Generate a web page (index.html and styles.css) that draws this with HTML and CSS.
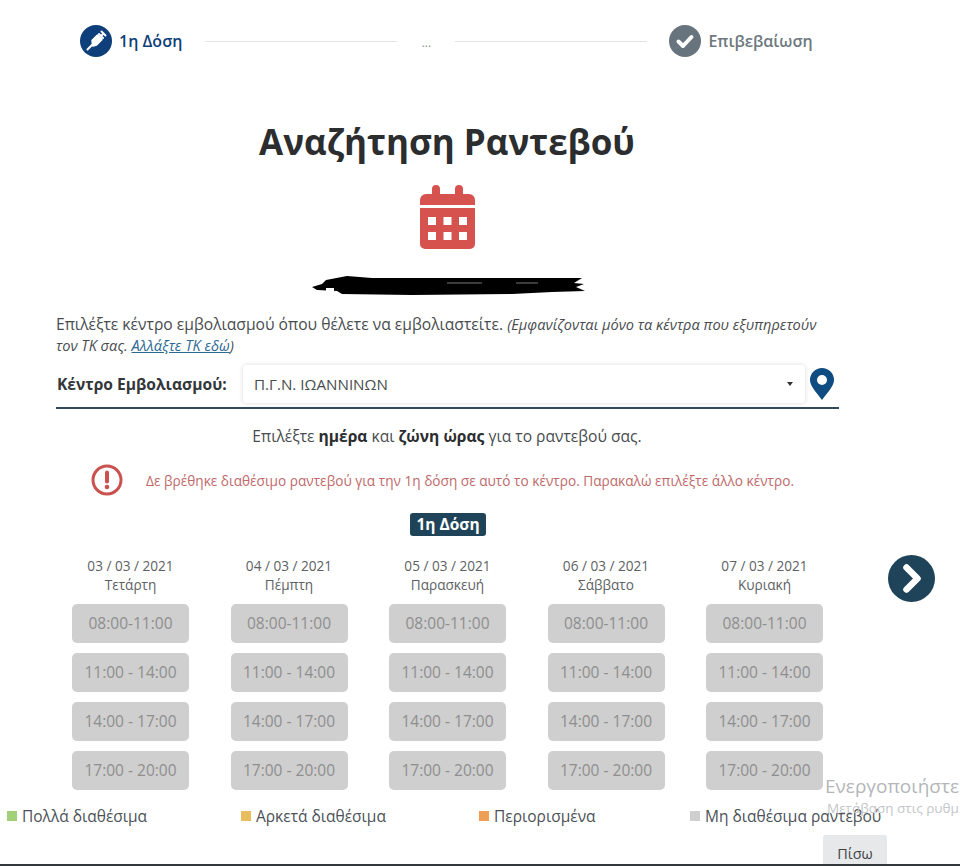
FILE: index.html
```html
<!DOCTYPE html>
<html lang="el">
<head>
  <meta charset="UTF-8">
  <meta name="viewport" content="width=device-width, initial-scale=1.0">
  <title>Αναζήτηση Ραντεβού</title>
  <link rel="stylesheet" href="styles.css">
</head>
<body>
  <div class="page">
    <header class="stepper">
      <div class="step step-active">
        <span class="step-icon">
          <svg viewBox="0 0 32 32" width="32" height="32">
            <path d="M12.500 15.500l5-5 4 4-5 5-3.500 1z" fill="#fff" stroke="#fff" stroke-width="2.400" stroke-linejoin="round"/>
            <path d="M7.500 24.500l5-5M19 9l4 4M21 11l2.500-2.500M21.500 6.500l4 4" fill="none" stroke="#fff" stroke-width="2" stroke-linecap="round"/>
          </svg>
        </span>
        <span class="step-label">1η Δόση</span>
      </div>
      <span class="step-line"></span>
      <span class="step-dots">...</span>
      <span class="step-line"></span>
      <div class="step step-next">
        <span class="step-icon">
          <svg viewBox="0 0 32 32" width="32" height="32">
            <path d="M9.500 16.500l4.500 4.500 8.500-9" fill="none" stroke="#fff" stroke-width="4" stroke-linecap="round" stroke-linejoin="round"/>
          </svg>
        </span>
        <span class="step-label">Επιβεβαίωση</span>
      </div>
    </header>

    <h1 class="title">Αναζήτηση Ραντεβού</h1>

    <svg class="calendar" viewBox="0 0 55 64" width="55" height="64">
      <path d="M12 4a4 4 0 0 1 8 0v5h15V4a4 4 0 0 1 8 0v5h6a6 6 0 0 1 6 6v5H0v-5a6 6 0 0 1 6-6h6z" fill="#d6524f"/>
      <path fill-rule="evenodd" d="M0 23h55v36a5 5 0 0 1-5 5H5a5 5 0 0 1-5-5zM8 32v8h8v-8zM23.500 32v8h8v-8zM39 32v8h8v-8zM8 47v8h8v-8zM23.500 47v8h8v-8zM39 47v8h8v-8z" fill="#d6524f"/>
    </svg>

    <svg class="redaction" viewBox="0 0 273 20" width="273" height="20">
      <path d="M0 12L10 9 14 5 35 1 60 3 150 3 270 3 262 8 272 9 264 12 273 16 240 17 200 19 100 20 30 19 25 16 5 15z" fill="#000"/>
      <path d="M14 13h8v3h-8z" fill="#fff"/>
      <path d="M135 8h35M204 8h22" stroke="#777" stroke-width="1"/>
    </svg>

    <main class="content">
      <p class="intro">Επιλέξτε κέντρο εμβολιασμού όπου θέλετε να εμβολιαστείτε. <em>(Εμφανίζονται μόνο τα κέντρα που εξυπηρετούν τον ΤΚ σας. <a href="#">Αλλάξτε ΤΚ εδώ</a>)</em></p>

      <div class="center-row">
        <label class="center-label">Κέντρο Εμβολιασμού:</label>
        <div class="select">
          <span>Π.Γ.Ν. ΙΩΑΝΝΙΝΩΝ</span>
          <span class="select-caret"></span>
        </div>
        <svg class="pin" viewBox="0 0 24 32" width="24" height="32">
          <path fill-rule="evenodd" d="M12 0a12 12 0 0 1 12 12c0 6-6 12-12 20C6 24 0 18 0 12A12 12 0 0 1 12 0zm0 7a5 5 0 1 0 0 10 5 5 0 0 0 0-10z" fill="#0f4c81"/>
        </svg>
      </div>
    </main>

    <p class="hint">Επιλέξτε <b>ημέρα</b> και <b>ζώνη ώρας</b> για το ραντεβού σας.</p>

    <div class="alert">
      <svg viewBox="0 0 32 32" width="32" height="32">
        <circle cx="16" cy="16" r="14" fill="none" stroke="#c9524e" stroke-width="3"/>
        <path d="M16 8.500v9" stroke="#c9524e" stroke-width="4" stroke-linecap="round"/>
        <circle cx="16" cy="23" r="2.300" fill="#c9524e"/>
      </svg>
      <span>Δε βρέθηκε διαθέσιμο ραντεβού για την 1η δόση σε αυτό το κέντρο. Παρακαλώ επιλέξτε άλλο κέντρο.</span>
    </div>

    <div class="badge-row"><span class="badge">1η Δόση</span></div>

    <section class="schedule">
      <div class="days">
        <div class="day">
          <div class="day-date">03 / 03 / 2021</div>
          <div class="day-name">Τετάρτη</div>
          <div class="slot">08:00-11:00</div>
          <div class="slot">11:00 - 14:00</div>
          <div class="slot">14:00 - 17:00</div>
          <div class="slot">17:00 - 20:00</div>
        </div>
        <div class="day">
          <div class="day-date">04 / 03 / 2021</div>
          <div class="day-name">Πέμπτη</div>
          <div class="slot">08:00-11:00</div>
          <div class="slot">11:00 - 14:00</div>
          <div class="slot">14:00 - 17:00</div>
          <div class="slot">17:00 - 20:00</div>
        </div>
        <div class="day">
          <div class="day-date">05 / 03 / 2021</div>
          <div class="day-name">Παρασκευή</div>
          <div class="slot">08:00-11:00</div>
          <div class="slot">11:00 - 14:00</div>
          <div class="slot">14:00 - 17:00</div>
          <div class="slot">17:00 - 20:00</div>
        </div>
        <div class="day">
          <div class="day-date">06 / 03 / 2021</div>
          <div class="day-name">Σάββατο</div>
          <div class="slot">08:00-11:00</div>
          <div class="slot">11:00 - 14:00</div>
          <div class="slot">14:00 - 17:00</div>
          <div class="slot">17:00 - 20:00</div>
        </div>
        <div class="day">
          <div class="day-date">07 / 03 / 2021</div>
          <div class="day-name">Κυριακή</div>
          <div class="slot">08:00-11:00</div>
          <div class="slot">11:00 - 14:00</div>
          <div class="slot">14:00 - 17:00</div>
          <div class="slot">17:00 - 20:00</div>
        </div>
      </div>
      <svg class="next" viewBox="0 0 47 47" width="47" height="47">
        <circle cx="23.500" cy="23.500" r="23.500" fill="#1f4459"/>
        <path d="M18.500 12.500l11 11-11 11" fill="none" stroke="#fff" stroke-width="6.500" stroke-linecap="round" stroke-linejoin="round"/>
      </svg>
    </section>

    <div class="legend">
      <div class="legend-item legend-many"><i></i>Πολλά διαθέσιμα</div>
      <div class="legend-item legend-some"><i></i>Αρκετά διαθέσιμα</div>
      <div class="legend-item legend-few"><i></i>Περιορισμένα</div>
      <div class="legend-item legend-none"><i></i>Μη διαθέσιμα ραντεβού</div>
    </div>

    <div class="back-row"><button class="back-btn">Πίσω</button></div>

    <div class="watermark">
      <div class="watermark-title">Ενεργοποιήστε</div>
      <div class="watermark-sub">Μετάβαση στις ρυθμ</div>
    </div>
  </div>
</body>
</html>
```

FILE: styles.css
```css
:root {
  --color-navy: #0f3f7a;
  --color-teal: #1f4459;
  --color-text: #484c4f;
  --color-red: #c9524e;
  --color-slot: #cfcfcf;
  --color-slot-text: #8e8e8e;
}

* {
  margin: 0;
  padding: 0;
  box-sizing: border-box;
}

body {
  background: #fff;
  color: var(--color-text);
  font-family: "Open Sans", "Noto Sans", sans-serif;
  font-size: 14px;
}

.page {
  position: relative;
  width: 960px;
  height: 866px;
  overflow: hidden;
  border-bottom: 2px solid #33383c;
}

/* Stepper */
.stepper {
  display: flex;
  align-items: center;
  height: 32px;
  margin-top: 25px;
  padding-left: 80px;
}

.step {
  display: flex;
  align-items: center;
  gap: 7px;
  font-size: 16px;
  font-weight: 600;
}

.step-icon {
  display: block;
  width: 32px;
  height: 32px;
  border-radius: 50%;
}

.step-active { color: var(--color-navy); margin-right: 23px; }
.step-active .step-icon { background: var(--color-navy); }
.step-next { color: #6d7880; margin-left: 22px; }
.step-next .step-icon { background: #68747d; }

.step-line {
  width: 192px;
  height: 1px;
  background: #e2e4e6;
}

.step-dots {
  width: 58px;
  text-align: center;
  font-size: 12px;
  color: #8a8f93;
  line-height: 1;
  padding-top: 4px;
}

/* Heading */
.title {
  width: 894px;
  margin-top: 62px;
  text-align: center;
  font-size: 35px;
  font-weight: 700;
  line-height: 46px;
  color: #2b2d2f;
}

.calendar {
  display: block;
  margin: 20px 0 0 420px;
}

.redaction {
  display: block;
  margin: 26px 0 0 312px;
}

/* Center picker */
.content {
  width: 783px;
  margin: 19px 0 0 56px;
}

.intro {
  font-size: 15.650px;
  line-height: 21px;
}

.intro em {
  font-size: 14.600px;
}

.intro a {
  color: #2c6a94;
}

.center-row {
  display: flex;
  align-items: center;
  height: 44px;
  margin-top: 9px;
  padding-bottom: 4px;
  border-bottom: 2px solid #2f4a5e;
}

.center-label {
  width: 187px;
  padding-left: 1px;
  font-size: 15.600px;
  font-weight: 700;
  color: #33373a;
}

.select {
  display: flex;
  align-items: center;
  justify-content: space-between;
  width: 562px;
  height: 38px;
  padding: 0 12px 0 11px;
  background: #fff;
  box-shadow: 0 0 4px rgba(0,0,0,.16);
  border-radius: 3px;
  font-size: 15.200px;
}

.select-caret {
  width: 0;
  height: 0;
  border-left: 3.500px solid transparent;
  border-right: 3.500px solid transparent;
  border-top: 4px solid #333;
}

.pin {
  flex: none;
  margin-left: 5px;
}

/* Messages */
.hint {
  width: 894px;
  margin-top: 16px;
  text-align: center;
  font-size: 15.600px;
  line-height: 22px;
}

.hint b {
  color: #2b2d2f;
}

.alert {
  display: flex;
  align-items: center;
  gap: 23px;
  margin: 17px 0 0 91px;
  height: 32px;
  color: #c0696a;
  font-size: 13.650px;
}

.badge-row {
  width: 896px;
  margin-top: 17px;
  text-align: center;
  line-height: 0;
}

.badge {
  display: inline-block;
  width: 76px;
  height: 23px;
  border-radius: 3px;
  background: var(--color-teal);
  color: #fff;
  font-size: 15.500px;
  font-weight: 700;
  line-height: 23px;
}

/* Day columns */
.schedule {
  display: flex;
  align-items: flex-start;
  margin: 20px 0 0 72px;
}

.days {
  display: flex;
  gap: 41.500px;
}

.day {
  width: 117px;
  text-align: center;
  font-size: 13.600px;
  color: #5d6164;
}

.day-date,
.day-name {
  line-height: 19px;
}

.day-name {
  margin-bottom: 10px;
}

.slot {
  height: 39px;
  margin-bottom: 10px;
  border-radius: 5px;
  background: var(--color-slot);
  color: var(--color-slot-text);
  font-size: 15.500px;
  line-height: 39px;
}

.next {
  flex: none;
  margin: -1px 0 0 65px;
}

/* Legend */
.legend {
  display: flex;
  margin: 5px 0 0 7px;
  font-size: 15.500px;
  line-height: 22px;
  color: #4b5157;
}

.legend-item {
  display: flex;
  align-items: center;
  gap: 5px;
  width: 234px;
}

.legend-item i {
  width: 10px;
  height: 10px;
}

.legend-some { width: 238px; }
.legend-few { width: 211px; }
.legend-none { width: 270px; flex: none; }
.legend-many i { background: #a3cf7a; }
.legend-some i { background: #e8bd5e; }
.legend-few i { background: #ef9f55; }
.legend-none i { background: #cfcfcf; }

.back-row {
  margin: 8px 0 0 823px;
}

.back-btn {
  display: block;
  width: 64px;
  height: 36px;
  border: 0;
  border-radius: 3px;
  background: #e6e8ea;
  color: #3f4346;
  font-family: inherit;
  font-size: 14.500px;
}

/* Activation text lying over the page */
.watermark {
  position: absolute;
  left: 825px;
  top: 774px;
  white-space: nowrap;
  color: #b4b6b8;
}

.watermark-title {
  font-size: 19px;
  line-height: 24px;
}

.watermark-sub {
  font-size: 13.500px;
  line-height: 20px;
  margin-left: 2px;
  color: #c4c6c8;
}
```
